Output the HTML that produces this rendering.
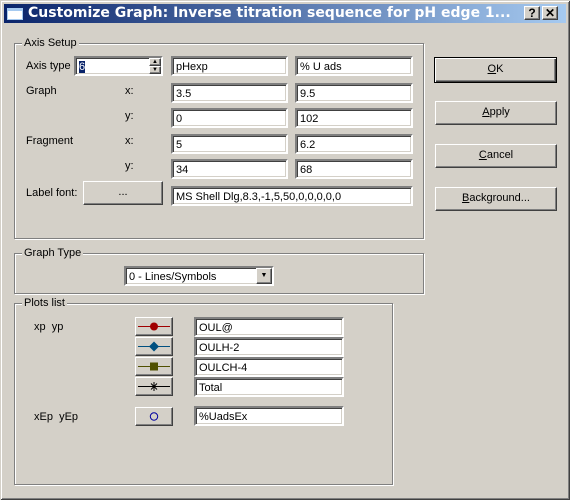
<!DOCTYPE html>
<html><head><style>
*{box-sizing:border-box}
body{margin:0;width:570px;height:500px;overflow:hidden;background:#d4d0c8;font-family:"Liberation Sans",sans-serif;font-size:11px;color:#000}
.win{position:absolute;left:0;top:0;width:570px;height:500px;background:#d4d0c8;box-shadow:inset 1px 1px #d4d0c8,inset -1px -1px #404040,inset 2px 2px #fff,inset -2px -2px #808080}
.a{position:absolute}
.title{left:4px;top:4px;width:562px;height:19px;background:linear-gradient(90deg,#0a246a,#a6caf0)}
.tt{left:28px;top:4px;color:#fff;font-family:"DejaVu Sans",sans-serif;font-weight:bold;font-size:14px;white-space:nowrap;line-height:18px}
.tb{width:16px;height:14px;background:#d4d0c8;border:1px solid;border-color:#fff #404040 #404040 #fff;box-shadow:inset -1px -1px #808080;font-weight:bold;font-size:12px;text-align:center;line-height:12px}
.grp{border:1px solid #808080;box-shadow:1px 1px #fff,inset 1px 1px #fff}
.gl{background:#d4d0c8;padding:0 2px;line-height:12px}
.ed{background:#fff;border:2px solid;border-color:#808080 #fff #fff #808080;box-shadow:inset 1px 1px #404040,inset -1px -1px #d4d0c8;height:20px;padding:3px 0 0 3px;line-height:13px;white-space:nowrap;overflow:hidden}
.bt{background:#d4d0c8;border:1px solid;border-color:#fff #404040 #404040 #fff;box-shadow:inset -1px -1px #808080;text-align:center}
</style></head><body><div class="win">
<div class="a title"></div>
<div class="a" style="left:7px;top:8px;width:16px;height:12px;background:#fff;border:1px solid #a6caf0;border-top:3px solid #a6caf0"></div>
<div class="a tt">Customize Graph: Inverse titration sequence for pH edge 1...</div>
<div class="a tb" style="left:524px;top:6px">?</div>
<div class="a tb" style="left:542px;top:6px">✕</div>

<div class="a grp" style="left:14px;top:43px;width:410px;height:196px"></div>
<div class="a gl" style="left:22px;top:37px">Axis Setup</div>
<div class="a" style="left:26px;top:60px">Axis type</div>
<div class="a ed" style="left:74px;top:56px;width:89px"><span style="background:#0a246a;color:#fff">6</span></div>
<div class="a bt" style="left:149px;top:58px;width:12px;height:8px;font-size:6px;line-height:6px">▲</div>
<div class="a bt" style="left:149px;top:66px;width:12px;height:8px;font-size:6px;line-height:6px">▼</div>
<div class="a ed" style="left:171px;top:56px;width:117px">pHexp</div>
<div class="a ed" style="left:295px;top:56px;width:118px">% U ads</div>
<div class="a" style="left:26px;top:85px">Graph</div>
<div class="a" style="left:125px;top:85px">x:</div>
<div class="a" style="left:125px;top:110px">y:</div>
<div class="a" style="left:26px;top:135px">Fragment</div>
<div class="a" style="left:125px;top:135px">x:</div>
<div class="a" style="left:125px;top:160px">y:</div>
<div class="a ed" style="left:171px;top:83px;width:117px">3.5</div>
<div class="a ed" style="left:295px;top:83px;width:118px">9.5</div>
<div class="a ed" style="left:171px;top:108px;width:117px">0</div>
<div class="a ed" style="left:295px;top:108px;width:118px">102</div>
<div class="a ed" style="left:171px;top:134px;width:117px">5</div>
<div class="a ed" style="left:295px;top:134px;width:118px">6.2</div>
<div class="a ed" style="left:171px;top:159px;width:117px">34</div>
<div class="a ed" style="left:295px;top:159px;width:118px">68</div>
<div class="a" style="left:26px;top:187px">Label font:</div>
<div class="a bt" style="left:83px;top:181px;width:80px;height:24px;line-height:21px">...</div>
<div class="a ed" style="left:171px;top:186px;width:242px">MS Shell Dlg,8.3,-1,5,50,0,0,0,0,0</div>

<div class="a bt" style="left:434px;top:57px;width:123px;height:26px;line-height:23px;border:1px solid #000;box-shadow:inset 1px 1px #fff,inset -1px -1px #404040,inset -2px -2px #808080"><u>O</u>K</div>
<div class="a bt" style="left:435px;top:101px;width:122px;height:24px;line-height:21px"><u>A</u>pply</div>
<div class="a bt" style="left:435px;top:144px;width:122px;height:24px;line-height:21px"><u>C</u>ancel</div>
<div class="a bt" style="left:435px;top:187px;width:122px;height:24px;line-height:21px"><u>B</u>ackground...</div>

<div class="a grp" style="left:14px;top:253px;width:410px;height:41px"></div>
<div class="a gl" style="left:22px;top:247px">Graph Type</div>
<div class="a ed" style="left:124px;top:266px;width:150px">0 - Lines/Symbols</div>
<div class="a bt" style="left:256px;top:268px;width:16px;height:16px;font-size:7px;line-height:14px">▼</div>

<div class="a grp" style="left:14px;top:303px;width:379px;height:182px"></div>
<div class="a gl" style="left:22px;top:297px">Plots list</div>
<div class="a" style="left:34px;top:321px">xp&nbsp; yp</div>
<div class="a" style="left:34px;top:411px">xEp&nbsp; yEp</div>
<div class="a bt" style="left:135px;top:317px;width:38px;height:19px"><svg width="36" height="17"><line x1="2" y1="8.5" x2="34" y2="8.5" stroke="#a00000"/><circle cx="18" cy="8.5" r="4" fill="#a00000"/></svg></div>
<div class="a bt" style="left:135px;top:337px;width:38px;height:19px"><svg width="36" height="17"><line x1="2" y1="8.5" x2="34" y2="8.5" stroke="#005080"/><path d="M18 3.5L23 8.5 18 13.5 13 8.5Z" fill="#005080"/></svg></div>
<div class="a bt" style="left:135px;top:357px;width:38px;height:19px"><svg width="36" height="17"><line x1="2" y1="8.5" x2="34" y2="8.5" stroke="#505000"/><rect x="14" y="4.5" width="8" height="8" fill="#505000"/></svg></div>
<div class="a bt" style="left:135px;top:377px;width:38px;height:19px"><svg width="36" height="17"><line x1="2" y1="8.5" x2="34" y2="8.5" stroke="#000"/><path d="M18 4V13M14 8.5H22M15 5.5L21 11.5M21 5.5L15 11.5" stroke="#000"/></svg></div>
<div class="a bt" style="left:135px;top:407px;width:38px;height:19px"><svg width="36" height="17"><circle cx="18" cy="8.5" r="3.7" fill="none" stroke="#0000a0"/></svg></div>
<div class="a ed" style="left:194px;top:317px;width:150px">OUL@</div>
<div class="a ed" style="left:194px;top:337px;width:150px">OULH-2</div>
<div class="a ed" style="left:194px;top:357px;width:150px">OULCH-4</div>
<div class="a ed" style="left:194px;top:377px;width:150px">Total</div>
<div class="a ed" style="left:194px;top:406px;width:150px">%UadsEx</div>
</div></body></html>
